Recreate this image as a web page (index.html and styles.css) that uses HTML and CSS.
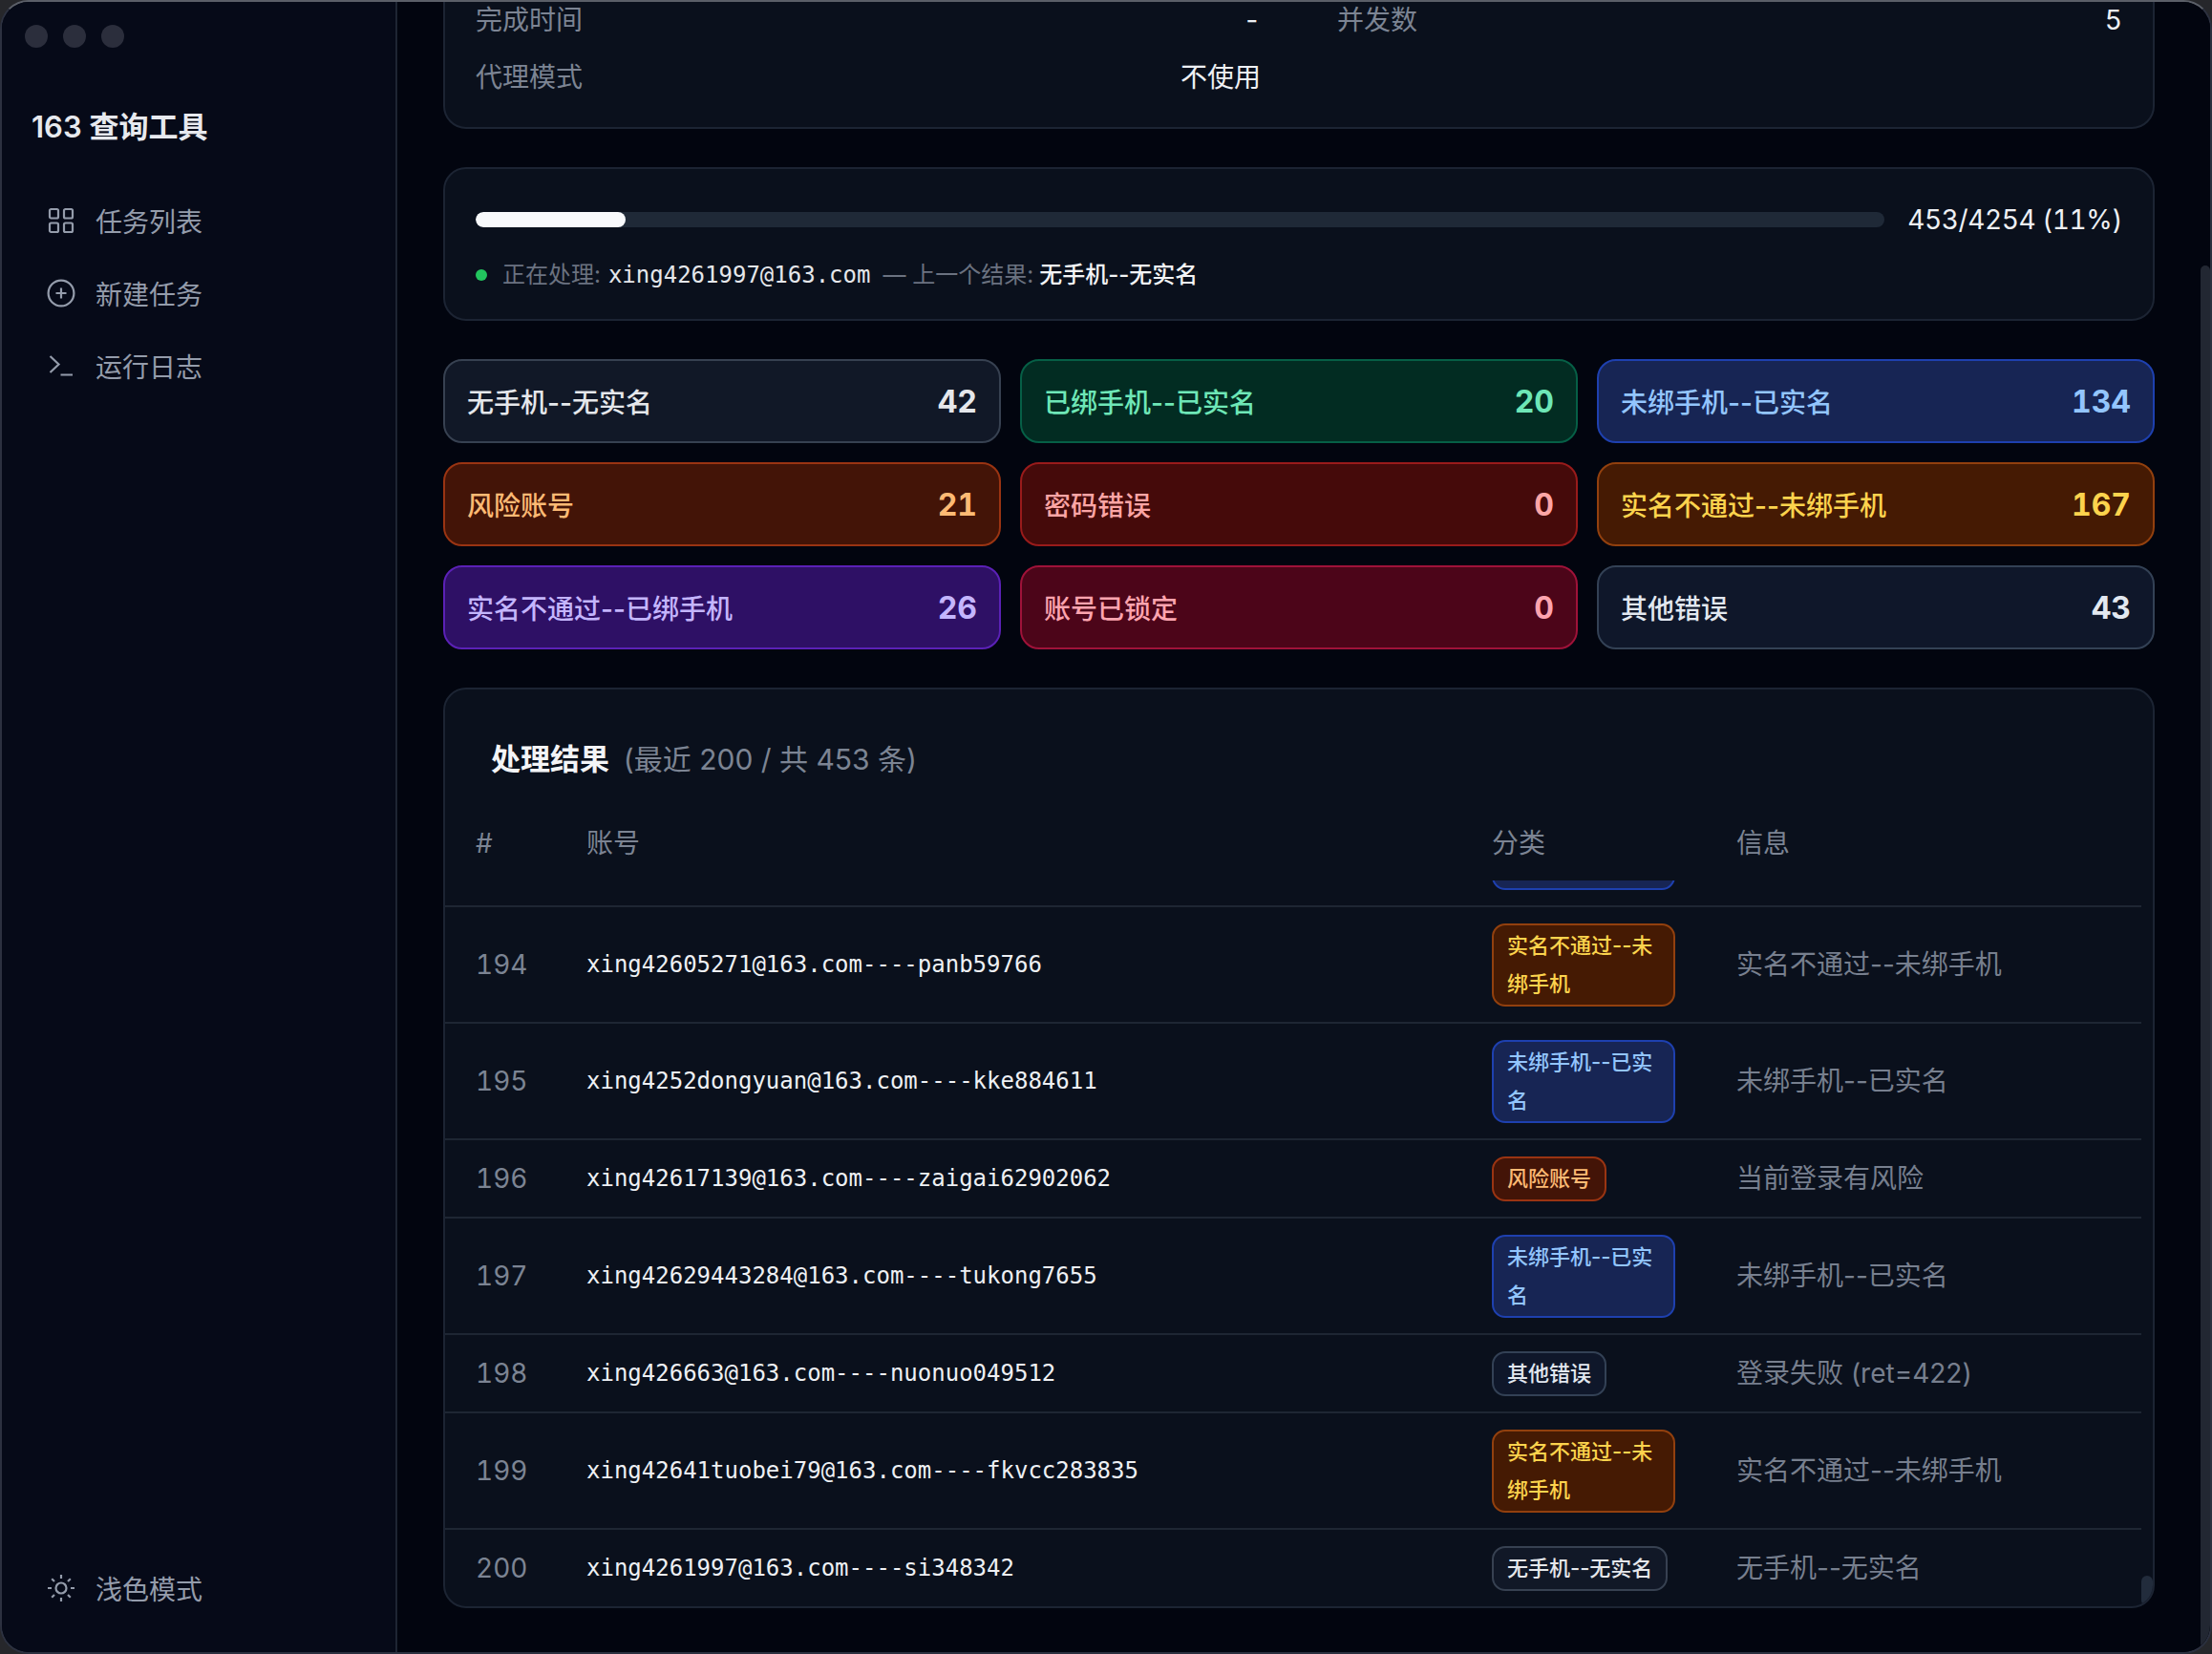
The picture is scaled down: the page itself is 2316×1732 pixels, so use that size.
FILE: index.html
```html
<!DOCTYPE html>
<html lang="zh-CN">
<head>
    <meta charset="UTF-8">
    <title>163 查询工具</title>
    <link rel="stylesheet" href="styles.css">
</head>
<body>
    <div class="window">
        <aside class="sidebar">
            <div class="lights"><i></i><i></i><i></i></div>
            <div class="brand">163 查询工具</div>
            <nav class="nav">
                <a class="nav_item">
                    <svg viewBox="0 0 28 28"><rect x="2" y="2" width="9" height="9.5" rx="1.5"/><rect x="17" y="2" width="9" height="9.5" rx="1.5"/><rect x="2" y="16.5" width="9" height="9.5" rx="1.5"/><rect x="17" y="16.5" width="9" height="9.5" rx="1.5"/></svg>
                    任务列表
                </a>
                <a class="nav_item">
                    <svg viewBox="0 0 28 28"><circle cx="14" cy="14" r="13.4"/><path d="M14 8.5v11M8.5 14h11"/></svg>
                    新建任务
                </a>
                <a class="nav_item">
                    <svg viewBox="0 0 28 28"><path d="M2.5 4l9 8.5L2.5 21M13.5 23.5h12.5"/></svg>
                    运行日志
                </a>
            </nav>
            <a class="nav_item theme">
                <svg viewBox="0 0 28 28"><circle cx="14" cy="14" r="5.5"/><path d="M14 0v4M14 24v4M0 14h4M24 14h4M4.2 4.2l2.8 2.8M21 21l2.8 2.8M4.2 23.8L7 21M21 7l2.8-2.8"/></svg>
                浅色模式
            </a>
        </aside>

        <main class="main">
            <div class="content">
                <section class="panel info">
                    <div class="info_row"><span>完成时间</span><b>-</b></div>
                    <div class="info_row"><span>并发数</span><b>5</b></div>
                    <div class="info_row"><span>代理模式</span><b>不使用</b></div>
                </section>

                <section class="panel progress">
                    <div class="progress_top">
                        <div class="bar"><div class="bar_fill" style="width: 10.65%"></div></div>
                        <div class="progress_num">453/4254 (11%)</div>
                    </div>
                    <div class="status">
                        <i class="dot"></i>
                        <span>正在处理:</span>
                        <code>xing4261997@163.com</code>
                        <span class="status_sep">— 上一个结果:</span>
                        <b>无手机--无实名</b>
                    </div>
                </section>

                <section class="stats">
                    <div class="stat grey"><span>无手机--无实名</span><b>42</b></div>
                    <div class="stat green"><span>已绑手机--已实名</span><b>20</b></div>
                    <div class="stat blue"><span>未绑手机--已实名</span><b>134</b></div>
                    <div class="stat orange"><span>风险账号</span><b>21</b></div>
                    <div class="stat red"><span>密码错误</span><b>0</b></div>
                    <div class="stat amber"><span>实名不通过--未绑手机</span><b>167</b></div>
                    <div class="stat purple"><span>实名不通过--已绑手机</span><b>26</b></div>
                    <div class="stat rose"><span>账号已锁定</span><b>0</b></div>
                    <div class="stat slate"><span>其他错误</span><b>43</b></div>
                </section>

                <section class="panel results">
                    <h2 class="results_title">处理结果 <small>(最近 200 / 共 453 条)</small></h2>
                    <div class="table_head">
                        <span class="col_num">#</span>
                        <span class="col_acc">账号</span>
                        <span class="col_cat">分类</span>
                        <span class="col_msg">信息</span>
                    </div>
                    <div class="table_wrap">
                        <div class="table_scroll">
                            <div class="cut_row"><div class="badge blue"></div></div>
                            <div class="row">
                                <span class="col_num">194</span><code class="col_acc">xing42605271@163.com----panb59766</code>
                                <div class="col_cat"><span class="badge amber">实名不通过--未绑手机</span></div><span class="col_msg">实名不通过--未绑手机</span>
                            </div>
                            <div class="row">
                                <span class="col_num">195</span><code class="col_acc">xing4252dongyuan@163.com----kke884611</code>
                                <div class="col_cat"><span class="badge blue">未绑手机--已实名</span></div><span class="col_msg">未绑手机--已实名</span>
                            </div>
                            <div class="row">
                                <span class="col_num">196</span><code class="col_acc">xing42617139@163.com----zaigai62902062</code>
                                <div class="col_cat"><span class="badge orange">风险账号</span></div><span class="col_msg">当前登录有风险</span>
                            </div>
                            <div class="row">
                                <span class="col_num">197</span><code class="col_acc">xing42629443284@163.com----tukong7655</code>
                                <div class="col_cat"><span class="badge blue">未绑手机--已实名</span></div><span class="col_msg">未绑手机--已实名</span>
                            </div>
                            <div class="row">
                                <span class="col_num">198</span><code class="col_acc">xing426663@163.com----nuonuo049512</code>
                                <div class="col_cat"><span class="badge slate">其他错误</span></div><span class="col_msg">登录失败 (ret=422)</span>
                            </div>
                            <div class="row">
                                <span class="col_num">199</span><code class="col_acc">xing42641tuobei79@163.com----fkvcc283835</code>
                                <div class="col_cat"><span class="badge amber">实名不通过--未绑手机</span></div><span class="col_msg">实名不通过--未绑手机</span>
                            </div>
                            <div class="row">
                                <span class="col_num">200</span><code class="col_acc">xing4261997@163.com----si348342</code>
                                <div class="col_cat"><span class="badge grey">无手机--无实名</span></div><span class="col_msg">无手机--无实名</span>
                            </div>
                        </div>
                        <div class="table_bar"><div class="table_thumb"></div></div>
                    </div>
                </section>
            </div>
            <div class="main_bar"><div class="main_thumb"></div></div>
        </main>
    </div>
</body>
</html>
```
FILE: styles.css
```css
*{
    box-sizing: border-box;
}
html, body{
    margin: 0px;
    padding: 0px;
    height: 100%;
    background-color: #26272b;
}
body{
    font-family: Inter, "Noto Sans CJK SC", sans-serif;
    font-size: 28px;
    overflow: hidden;
}
code{
    font-family: "DejaVu Sans Mono", "Noto Sans CJK SC", monospace;
}
b{
    font-weight: 400;
}

/* window frame */
.window{
    display: flex;
    height: 1732px;
    border: 2px solid #2c3140;
    border-top-color: #5b5f68;
    border-radius: 30px;
    overflow: hidden;
    background-color: #02050f;
}

/* sidebar */
.sidebar{
    display: flex;
    flex-direction: column;
    flex: 0 0 414px;
    border-right: 2px solid #1e2533;
    background-color: #060a18;
    padding: 24px 0px 43px 0px;
}
.lights{
    display: flex;
    gap: 16px;
    padding-left: 24px;
}
.lights i{
    width: 24px;
    height: 24px;
    border-radius: 50%;
    background-color: #2b2e3c;
}
.brand{
    margin: 59px 0px 0px 31px;
    font-size: 31px;
    line-height: 48px;
    font-weight: 600;
    color: #e7e9ee;
}
.nav{
    display: flex;
    flex-direction: column;
    flex: 1;
    gap: 28px;
    margin-top: 50px;
}
.nav_item{
    display: flex;
    align-items: center;
    gap: 22px;
    height: 48px;
    padding-left: 48px;
    font-size: 28px;
    color: #949cab;
}
.nav_item svg{
    width: 28px;
    height: 28px;
    fill: none;
    stroke: #949cab;
    stroke-width: 2.2;
    overflow: visible;
}

/* main area */
.main{
    position: relative;
    flex: 1;
    overflow: hidden;
    background-color: #02050f;
}
.content{
    display: flex;
    flex-direction: column;
    gap: 40px;
    margin-top: -35px;
    padding: 0px 58px 0px 48px;
}
.panel{
    border: 2px solid #1c2433;
    border-radius: 24px;
    background-color: #0a101c;
}

.info{
    display: grid;
    grid-template-columns: 1fr 1fr;
    column-gap: 80px;
    row-gap: 20px;
    padding: 32px 32px 32px 32px;
    line-height: 40px;
}
.info_row{
    display: flex;
    justify-content: space-between;
    color: #7c8493;
}
.info_row b{
    color: #eef0f4;
    font-variant-numeric: tabular-nums;
}

.progress{
    padding: 41px 32px 0px 32px;
    height: 161px;
}
.progress_top{
    display: flex;
    align-items: center;
    gap: 24px;
}
.bar{
    flex: 1;
    height: 16px;
    border-radius: 8px;
    background-color: #1f2937;
    overflow: hidden;
}
.bar_fill{
    height: 100%;
    border-radius: 8px;
    background-color: #f8f9fb;
}
.progress_num{
    color: #eef0f4;
    line-height: 24px;
    letter-spacing: -0.4px;
    font-variant-numeric: tabular-nums;
}
.status{
    display: flex;
    align-items: center;
    margin-top: 28px;
    font-size: 24px;
    line-height: 36px;
    color: #6b7280;
}
.status .dot{
    width: 12px;
    height: 12px;
    margin-right: 16px;
    border-radius: 50%;
    background-color: #22c55e;
}
.status code{
    margin-left: 8px;
    color: #e5e7eb;
}
.status_sep{
    margin-left: 13px;
}
.status b{
    margin-left: 6px;
    font-weight: 500;
    color: #f3f4f6;
}

/* stat cards */
.stats{
    display: grid;
    grid-template-columns: repeat(3, 1fr);
    gap: 20px;
}
.stat{
    display: flex;
    align-items: center;
    justify-content: space-between;
    height: 88px;
    padding: 0px 23px;
    border: 2px solid;
    border-radius: 20px;
    font-weight: 500;
}
.stat b{
    font-size: 32px;
    font-weight: 700;
    font-variant-numeric: tabular-nums;
}

/* shared colours, stat cards and badges */
.grey{   background-color: #111827; border-color: #374151; color: #e5e7eb; }
.green{  background-color: #022c22; border-color: #065f46; color: #6ee7b7; }
.blue{   background-color: #172554; border-color: #1e40af; color: #93c5fd; }
.orange{ background-color: #431407; border-color: #9a3412; color: #fdba74; }
.red{    background-color: #450a0a; border-color: #991b1b; color: #fca5a5; }
.amber{  background-color: #451a03; border-color: #92400e; color: #fcd34d; }
.purple{ background-color: #2e1065; border-color: #5b21b6; color: #c4b5fd; }
.rose{   background-color: #4c0519; border-color: #9f1239; color: #fda4af; }
.slate{  background-color: #0f172a; border-color: #334155; color: #e2e8f0; }

/* results table */
.results{
    height: 964px;
    overflow: hidden;
}
.results_title{
    margin: 0px;
    padding: 49px 0px 0px 48px;
    font-size: 31px;
    line-height: 48px;
    font-weight: 600;
    color: #f3f4f6;
}
.results_title small{
    margin-left: 7px;
    font-size: 30px;
    font-weight: 400;
    color: #7c8493;
}
.table_head{
    display: flex;
    align-items: center;
    margin-top: 37px;
    height: 66px;
    padding-bottom: 12px;
    line-height: 40px;
    color: #7c8493;
}
.col_num{
    flex: 0 0 116px;
    padding-left: 32px;
    font-variant-numeric: tabular-nums;
}
.col_acc{
    flex: 0 0 948px;
    padding-left: 32px;
}
.col_cat{
    flex: 0 0 256px;
    padding: 0px 32px 0px 32px;
}
.col_msg{
    flex: 1;
    padding-left: 32px;
}
.table_wrap{
    display: flex;
    height: 760px;
}
.table_scroll{
    flex: 1;
    overflow: hidden;
}
.cut_row{
    height: 28px;
    padding-left: 1096px;
    border-bottom: 2px solid #1e2633;
    overflow: hidden;
}
.cut_row .badge{
    width: 192px;
    height: 87px;
    margin-top: -77px;
}
.row{
    display: flex;
    align-items: center;
    padding: 16.5px 0px;
    border-bottom: 2px solid #1e2633;
    line-height: 40px;
    color: #777f8e;
}
.row:last-child{
    border-bottom: none;
}
.row .col_num{
    color: #7c8493;
}
.row .col_acc{
    font-size: 24px;
    color: #eef0f4;
}
.badge{
    display: block;
    width: fit-content;
    padding: 1.5px 14px;
    border-width: 2px;
    border-style: solid;
    border-radius: 14px;
    font-size: 22px;
    font-weight: 500;
    line-height: 40px;
}
.table_bar{
    flex: 0 0 12px;
    display: flex;
    align-items: flex-end;
}
.table_thumb{
    width: 100%;
    height: 32px;
    border-radius: 6px;
    background-color: #222c3c;
}

/* page scrollbar */
.main_bar{
    position: absolute;
    top: 0px;
    right: 0px;
    bottom: 0px;
    width: 10px;
    overflow: hidden;
}
.main_thumb{
    height: 1448px;
    margin-top: 276px;
    border-radius: 6px;
    background-color: #222732;
}
```
